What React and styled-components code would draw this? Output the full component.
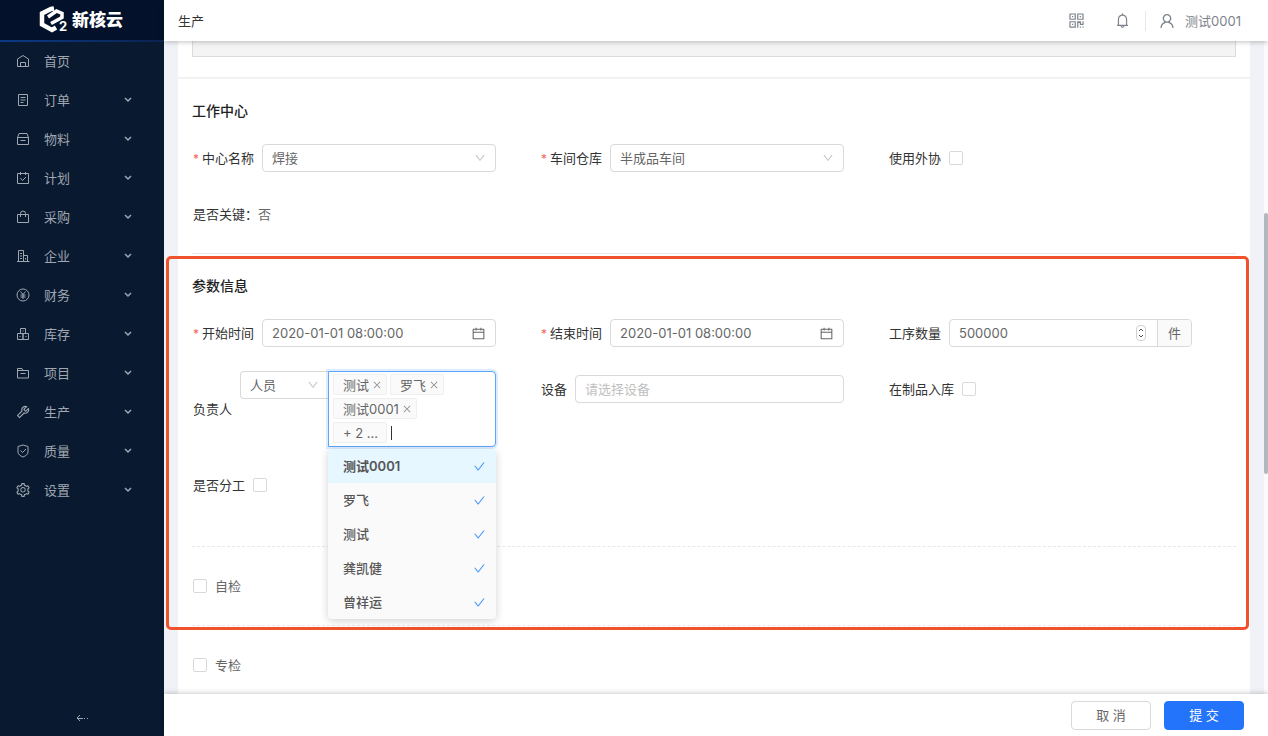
import React, { useState } from "react";
import styled, { createGlobalStyle } from "styled-components";
import {
  AiOutlineBell,
  AiOutlineCalendar,
  AiOutlineCheck,
  AiOutlineClose,
  AiOutlineDown,
  AiOutlineQrcode,
  AiOutlineSetting,
  AiOutlineTool,
  AiOutlineUser,
} from "react-icons/ai";

const GlobalStyle = createGlobalStyle`
  * {
    box-sizing: border-box;
  }
  body {
    margin: 0;
    background: #f0f2f7;
  }
  body, button, input, select {
    font-family: Inter, "Noto Sans CJK SC", sans-serif;
    font-size: 13px;
    line-height: 20px;
    color: #666;
  }
`;

const Layout = styled.div`
  display: flex;
  height: 100vh;
  overflow: hidden;
`;

const Sidebar = styled.aside`
  display: flex;
  flex-direction: column;
  flex: none;
  width: 164px;
  background: #081930;
`;

const Brand = styled.a`
  display: flex;
  align-items: center;
  gap: 2px;
  height: 40px;
  padding-left: 38px;
  background: #03122a;
  color: #fff;
  font-size: 17px;
  font-weight: 900;
  text-decoration: none;
`;

const BrandLine = styled.div`
  height: 2px;
  margin-bottom: -1px;
  background: linear-gradient(90deg, #0c3a86, #0a2350);
`;

const Menu = styled.ul`
  flex: 1;
  margin: 0;
  padding: 0;
  list-style: none;
`;

const MenuLink = styled.a`
  display: flex;
  align-items: center;
  height: 39px;
  padding: 0 28px 0 15px;
  color: #a0a7b1;
  text-decoration: none;

  span {
    flex: 1;
    margin-left: 13px;
  }
`;

const MenuIcon = styled.svg`
  width: 16px;
  height: 16px;
  fill: none;
  stroke: currentColor;
  stroke-width: ${(props) => props.$weight || 1}px;
`;

const Collapse = styled.button`
  height: 36px;
  padding: 4px 0 0;
  border: 0;
  background: none;
  color: #a0a7b1;
`;

const Main = styled.div`
  display: flex;
  flex: 1;
  flex-direction: column;
  min-width: 0;
`;

const Header = styled.header`
  z-index: 1;
  display: flex;
  align-items: center;
  flex: none;
  height: 41px;
  padding: 0 27px 0 14px;
  background: #fff;
  color: #333;
  box-shadow: 0 1px 5px rgba(0, 0, 0, 0.25);
`;

const HeaderTools = styled.div`
  display: flex;
  align-items: center;
  margin-left: auto;
  color: #7d838c;
`;

const IconButton = styled.button`
  display: flex;
  padding: 0;
  margin-right: ${(props) => props.$gap}px;
  border: 0;
  background: none;
  color: inherit;
  font-size: ${(props) => props.$size}px;
`;

const UserLink = styled.a`
  display: flex;
  align-items: center;
  gap: 9px;
  padding-left: 12px;
  border-left: 1px solid #e8e8e8;
  color: inherit;
  text-decoration: none;

  svg {
    font-size: 18px;
  }
`;

const Viewport = styled.div`
  display: flex;
  flex: 1;
  min-height: 0;
  overflow: hidden;
`;

const Card = styled.main`
  flex: 1;
  min-width: 0;
  margin: 0 14px;
  background: #fff;
`;

const ScrollTrack = styled.div`
  flex: none;
  width: 4px;
  padding-top: 172px;
  background: #fafafa;
`;

const ScrollThumb = styled.div`
  height: 261px;
  border-radius: 2px;
  background: #b2b8c0;
`;

const Remark = styled.div`
  padding: 0 14px 20px;
  border-bottom: 2px solid #f2f2f3;

  div {
    height: 16px;
    border: 1px solid #dcdcdc;
    border-top: 0;
    background: #f4f4f4;
  }
`;

const Section = styled.section`
  position: relative;
  margin: 0 14px;
  padding: 20px 0 ${(props) => props.$bottom}px;
  border-bottom: 1px ${(props) => props.$line || "solid"} #e8e8e8;
`;

const Title = styled.h2`
  margin: 0 0 17px;
  color: #222;
  font-size: 14px;
  font-weight: 500;
  line-height: 24px;
`;

const FieldGrid = styled.div`
  display: grid;
  grid-template-columns: repeat(3, 1fr);
  align-items: start;
  row-gap: 20px;
`;

const FieldBox = styled.div`
  display: flex;
  align-items: center;
  gap: 8px;
  min-height: 36px;
  padding: 0 44px 0 1px;
`;

const Label = styled.label`
  flex: none;
  color: #333;
`;

const Star = styled.span`
  margin-right: 3px;
  color: #f5635f;
  font-size: 12px;
`;

const Control = styled.div`
  display: flex;
  align-items: center;
  flex: 1;
  min-width: 0;
  height: 28px;
  padding-right: 9px;
  border: 1px solid #d9d9d9;
  border-radius: 4px;
  background: #fff;

  input,
  select {
    flex: 1;
    min-width: 0;
    height: 26px;
    padding: 0 0 0 9px;
    border: 0;
    outline: 0;
    background: none;
    appearance: none;
  }
  input::placeholder {
    color: #bfbfbf;
  }
  svg {
    flex: none;
    color: ${(props) => props.$iconColor || "#bfbfbf"};
    font-size: ${(props) => props.$iconSize || 12}px;
  }
`;

const Checkbox = styled.input`
  flex: none;
  width: 14px;
  height: 14px;
  margin: 0;
  border: 1px solid #d9d9d9;
  border-radius: 2px;
  background: #fff;
  appearance: none;

  &:checked {
    background: #2374fa;
  }
`;

const NumberControl = styled(Control)`
  padding-right: 0;

  input::-webkit-inner-spin-button {
    display: none;
  }
  svg {
    width: 10px;
    height: 16px;
    margin-right: 11px;
    fill: none;
  }
`;

const Unit = styled.span`
  padding: 3px 10px;
  border-left: 1px solid #d9d9d9;
  border-radius: 0 3px 3px 0;
  background: #fafafa;
`;

const OwnerGroup = styled.div`
  position: relative;
  display: flex;
  align-items: flex-start;
  flex: 1;
  min-width: 0;
`;

const KindControl = styled(Control)`
  flex: none;
  width: 88px;
  border-right: 0;
  border-radius: 4px 0 0 4px;
`;

const TagBox = styled.div`
  display: flex;
  flex-wrap: wrap;
  flex: 1;
  gap: 3px;
  min-width: 0;
  padding: 2px 24px 3px 4px;
  border: 1px solid #5ba5fb;
  border-radius: 0 4px 4px 0;
  background: #fff;
  box-shadow: 0 0 0 2px rgba(64, 150, 255, 0.18);
`;

const Tag = styled.span`
  display: flex;
  align-items: center;
  gap: 3px;
  height: 21px;
  padding: 0 ${(props) => (props.$more ? 8 : 4)}px 0 9px;
  border: 1px solid #efefef;
  border-radius: 2px;
  background: #fafafa;

  button {
    display: flex;
    padding: 0;
    border: 0;
    background: none;
    color: #8c8c8c;
    font-size: 10px;
  }
`;

const Caret = styled.span`
  width: 1px;
  height: 14px;
  margin: 4px 0 0 1px;
  background: #333;
`;

const Dropdown = styled.ul`
  position: absolute;
  z-index: 2;
  top: calc(100% + 2px);
  right: 0;
  left: 88px;
  margin: 0;
  padding: 0;
  overflow: hidden;
  border-radius: 4px;
  background: #fafafa;
  box-shadow: 0 2px 8px rgba(0, 0, 0, 0.18);
  list-style: none;
`;

const Option = styled.li`
  display: flex;
  align-items: center;
  justify-content: space-between;
  height: 34px;
  padding: 0 10px 0 15px;
  background: ${(props) => (props.$active ? "#e6f7ff" : "none")};
  color: #555;
  font-weight: ${(props) => (props.$active ? 600 : 500)};

  svg {
    color: #4597fb;
    font-size: 13px;
  }
`;

const Highlight = styled.div`
  position: absolute;
  z-index: 1;
  top: 2px;
  right: -13px;
  bottom: -84px;
  left: -26px;
  border: 3px solid #f0522b;
  border-radius: 5px;
  pointer-events: none;
`;

const CheckRow = styled.label`
  display: flex;
  align-items: center;
  gap: 8px;
  height: 79px;
  margin: 0 14px;
  padding-left: 1px;
  border-bottom: 1px dashed #e8e8e8;
`;

const Footer = styled.footer`
  z-index: 1;
  display: flex;
  align-items: center;
  justify-content: flex-end;
  flex: none;
  gap: 13px;
  height: 42px;
  padding: 0 24px;
  background: #fff;
  box-shadow: 0 -1px 5px rgba(0, 0, 0, 0.2);
`;

const Button = styled.button`
  width: 80px;
  height: 29px;
  padding: 0;
  border: 1px solid ${(props) => (props.$primary ? "#2374fa" : "#d9d9d9")};
  border-radius: 4px;
  background: ${(props) => (props.$primary ? "#2374fa" : "#fff")};
  color: ${(props) => (props.$primary ? "#fff" : "#666")};
`;

const menu = [
  { name: "首页", icon: <path d="M2.500 13.500V6L8 2.500 13.500 6v7.500zM5.500 13V9.500h5V13" />, leaf: true },
  { name: "订单", icon: <path d="M3.500 2.500h9v11h-9zM5.500 5.500h5M5.500 8h5M5.500 10.500h3" /> },
  { name: "物料", icon: <path d="M2.500 6.500h11v7h-11zM2.500 6.500l1.500-4h8l1.500 4M5.500 9.500h5" /> },
  { name: "计划", icon: <path d="M2.500 3.500h11v10h-11zM5.500 2v3M10.500 2v3M5.500 8l2 2.500 3.500-3.500" /> },
  { name: "采购", icon: <path d="M2.500 5.500h11v8h-11zM5.500 8V4.500a2.500 2.500 0 0 1 5 0V8" /> },
  { name: "企业", icon: <path d="M3.500 13.500v-11h5v11M8.500 7.500h4v6M2 13.500h12.500M5 5.500h2M5 8h2M5 10.500h2M10.500 10v1.500" /> },
  { name: "财务", icon: <><circle cx="8" cy="8" r="6" /><path d="M5.500 4.500L8 7.500l2.500-3M8 7.500V12M5.500 8h5M5.500 10h5" /></> },
  { name: "库存", icon: <path d="M5.500 2.500h5v5h-5zM2.500 7.500H8v6H2.500zM8 7.500h5.500v6H8zM7.500 5h1M4.500 10.500h1M10.500 10.500h1" /> },
  { name: "项目", icon: <path d="M2.500 13V3.500H7l1 2h5.500V13zM2.500 5.500H8M5.500 8.500h5" /> },
  { name: "生产", Icon: AiOutlineTool },
  { name: "质量", icon: <path d="M8 2l5 1.500V9c0 2.500-2.500 4-5 5-2.500-1-5-2.500-5-5V3.500zM5.500 7.500l2 2L11 6" /> },
  { name: "设置", Icon: AiOutlineSetting },
];

const options = ["测试0001", "罗飞", "测试", "龚凯健", "曾祥运"];

function Logo() {
  return (
    <svg width="32" height="32" viewBox="0 0 32 32">
      <path
        d="M16 4.500L13 5 4 9.500v11L14 26l4-2.500"
        fill="none"
        stroke="#fff"
        strokeWidth="4.500"
      />
      <path
        d="M10 13l8.500-6L24 9.500v4L13 19.500"
        fill="none"
        stroke="#fff"
        strokeWidth="3.500"
      />
      <text x="21" y="27" fill="#fff" fontSize="13" fontWeight="700">
        2
      </text>
    </svg>
  );
}

function Field({ label, id, required, children }) {
  return (
    <FieldBox>
      <Label htmlFor={id}>
        {required && <Star>*</Star>}
        {label}
      </Label>
      {children}
    </FieldBox>
  );
}

function SelectField({ label, id, value }) {
  return (
    <Field label={label} id={id} required>
      <Control>
        <select id={id} defaultValue={value}>
          <option>{value}</option>
        </select>
        <AiOutlineDown />
      </Control>
    </Field>
  );
}

function DateField({ label, id, value }) {
  return (
    <Field label={label} id={id} required>
      <Control $iconColor="#666" $iconSize={15}>
        <input id={id} type="text" defaultValue={value} />
        <AiOutlineCalendar />
      </Control>
    </Field>
  );
}

function CheckField({ label, id }) {
  return (
    <Field label={label} id={id}>
      <Checkbox id={id} type="checkbox" />
    </Field>
  );
}

function OwnerField() {
  const [tags, setTags] = useState(["测试", "罗飞", "测试0001"]);

  return (
    <Field label="负责人" id="ownerKind">
      <OwnerGroup>
        <KindControl>
          <select id="ownerKind" defaultValue="人员">
            <option>人员</option>
          </select>
          <AiOutlineDown />
        </KindControl>
        <TagBox>
          {tags.map((tag) => (
            <Tag key={tag}>
              {tag}
              <button
                type="button"
                aria-label={`移除${tag}`}
                onClick={() => setTags(tags.filter((t) => t !== tag))}
              >
                <AiOutlineClose />
              </button>
            </Tag>
          ))}
          <Tag $more>+ 2 ...</Tag>
          <Caret />
        </TagBox>
        <Dropdown role="listbox">
          {options.map((option, index) => (
            <Option key={option} role="option" aria-selected $active={index === 0}>
              {option}
              <AiOutlineCheck />
            </Option>
          ))}
        </Dropdown>
      </OwnerGroup>
    </Field>
  );
}

export default function App() {
  return (
    <Layout>
      <GlobalStyle />
      <Sidebar>
        <Brand href="#">
          <Logo />
          新核云
        </Brand>
        <BrandLine />
        <Menu>
          {menu.map(({ name, icon, Icon, leaf }) => (
            <li key={name}>
              <MenuLink href="#">
                {Icon ? <Icon size={16} /> : <MenuIcon viewBox="0 0 16 16">{icon}</MenuIcon>}
                <span>{name}</span>
                {!leaf && (
                  <MenuIcon viewBox="0 0 16 16" $weight={2}>
                    <path d="M5 6l3 3 3-3" strokeWidth="1.500" />
                  </MenuIcon>
                )}
              </MenuLink>
            </li>
          ))}
        </Menu>
        <Collapse aria-label="收起菜单">
          <MenuIcon viewBox="0 0 16 16">
            <path d="M6 5L3 8l3 3M3 8.500h6M10 8.500h1M13 8.500h1" />
          </MenuIcon>
        </Collapse>
      </Sidebar>

      <Main>
        <Header>
          生产
          <HeaderTools>
            <IconButton $gap={28} $size={19} aria-label="二维码">
              <AiOutlineQrcode />
            </IconButton>
            <IconButton $gap={14} $size={17} aria-label="通知">
              <AiOutlineBell />
            </IconButton>
            <UserLink href="#">
              <AiOutlineUser />
              测试0001
            </UserLink>
          </HeaderTools>
        </Header>

        <Viewport>
          <Card>
            <Remark>
              <div />
            </Remark>

            <Section $bottom={21}>
              <Title>工作中心</Title>
              <FieldGrid>
                <SelectField label="中心名称" id="center" value="焊接" />
                <SelectField label="车间仓库" id="warehouse" value="半成品车间" />
                <CheckField label="使用外协" id="outsource" />
                <FieldBox>
                  <span>
                    <Label as="span">是否关键：</Label>否
                  </span>
                </FieldBox>
              </FieldGrid>
            </Section>

            <Section $bottom={43} $line="dashed">
              <Title>参数信息</Title>
              <FieldGrid>
                <DateField label="开始时间" id="start" value="2020-01-01 08:00:00" />
                <DateField label="结束时间" id="end" value="2020-01-01 08:00:00" />
                <Field label="工序数量" id="amount">
                  <NumberControl>
                    <input id="amount" type="number" defaultValue="500000" />
                    <svg viewBox="0 0 10 16">
                      <rect x="0.5" y="0.5" width="9" height="15" rx="3.5" stroke="#d0d0d0" />
                      <path d="M3 6l2-2 2 2M3 10l2 2 2-2" stroke="#555" />
                    </svg>
                    <Unit>件</Unit>
                  </NumberControl>
                </Field>
                <OwnerField />
                <Field label="设备" id="device">
                  <Control>
                    <input id="device" type="text" placeholder="请选择设备" />
                  </Control>
                </Field>
                <CheckField label="在制品入库" id="stock" />
                <CheckField label="是否分工" id="split" />
              </FieldGrid>
              <Highlight />
            </Section>

            <CheckRow>
              <Checkbox type="checkbox" />
              自检
            </CheckRow>
            <CheckRow>
              <Checkbox type="checkbox" />
              专检
            </CheckRow>
          </Card>
          <ScrollTrack>
            <ScrollThumb />
          </ScrollTrack>
        </Viewport>

        <Footer>
          <Button type="button">取 消</Button>
          <Button type="submit" $primary>
            提 交
          </Button>
        </Footer>
      </Main>
    </Layout>
  );
}
